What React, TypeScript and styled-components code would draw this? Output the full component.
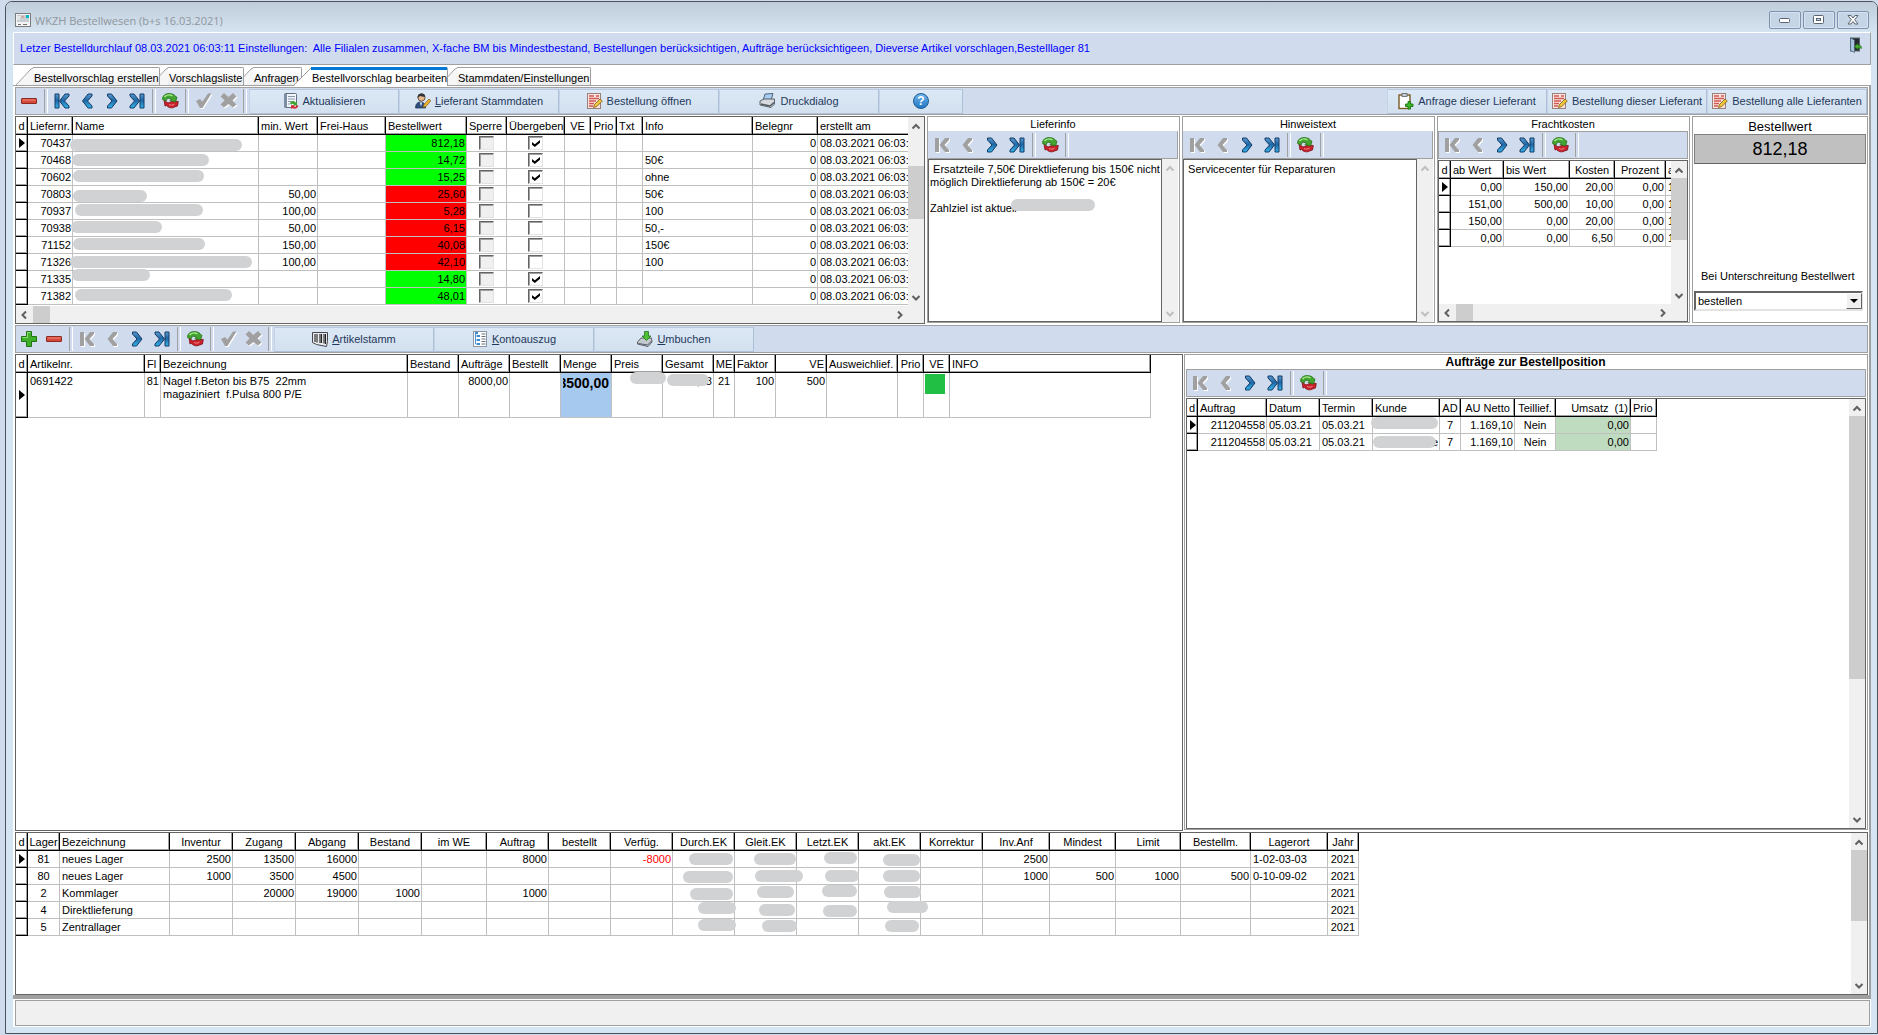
import React from "react";
import styled, { createGlobalStyle, css } from "styled-components";

const GRAY = "#a0a0a0";
const DARK = "#646464";
const BAR = "#d0dcee";
const UI_FONT = '"Liberation Sans", Arial, sans-serif';

const GlobalStyle = createGlobalStyle`
  * { box-sizing: border-box; }
  body {
    margin: 0;
    background: ${BAR};
    font-family: ${UI_FONT};
    font-size: 11px;
    line-height: 13px;
    color: #000;
  }
  button, input, select, textarea { font: inherit; color: inherit; margin: 0; }
`;

/* ---------- window frame ---------- */

const Desktop = styled.div`
  min-height: 100vh;
  display: flex;
  padding: 1px 0 1px 5px;
`;

const WindowFrame = styled.div`
  flex: 1;
  min-width: 0;
  display: flex;
  flex-direction: column;
  border: 1px solid #4b5259;
  border-radius: 7px 7px 0 0;
  background: #d6e5f2;
  padding: 0 6px 6px 7px;
`;

const TitleBar = styled.header`
  display: flex;
  align-items: center;
  gap: 4px;
  height: 30px;
  margin: 0 -6px 0 -7px;
  padding: 0 8px 0 9px;
  border-radius: 6px 6px 0 0;
  background: linear-gradient(#bfccda, #d6e4f1);
`;

const TitleIcon = styled.span`
  display: flex;
  padding-top: 6px;
`;

const Title = styled.h1`
  flex: 1;
  margin: 0;
  padding-top: 7px;
  font: 400 11px/16px "Open Sans", "Noto Sans", sans-serif;
  color: #8f969d;
`;

const WindowButtons = styled.div`
  display: flex;
  gap: 2px;
  padding-top: 6px;
`;

const WindowButton = styled.button`
  width: 32px;
  height: 18px;
  padding: 0;
  display: flex;
  align-items: center;
  justify-content: center;
  border: 1px solid #8092ad;
  border-radius: 2px;
  background: #c6d5e5;
  box-shadow: inset 0 0 0 1px #d6e3f0;
`;

const Client = styled.div`
  flex: 1;
  display: flex;
  flex-direction: column;
  min-height: 0;
  background: #fff;
`;

const InfoBar = styled.div`
  display: flex;
  align-items: center;
  justify-content: space-between;
  height: 33px;
  padding: 0 6px;
  border: 1px solid #fff;
  border-right-color: ${GRAY};
  border-bottom-color: ${GRAY};
  background: ${BAR};
  color: #0000ff;
  white-space: pre;
`;

const IconButton = styled.button`
  display: flex;
  align-items: center;
  justify-content: center;
  width: 25px;
  height: 25px;
  padding: 0;
  border: 0;
  background: none;
`;

const ExitButton = styled(IconButton)`
  width: 16px;
  padding-bottom: 7px;
`;

/* ---------- tabs ---------- */

const TabList = styled.div`
  display: flex;
  align-items: flex-end;
  height: 20px;
  padding-left: 3px;
`;

const TabButton = styled.button<{ $w: number; $order: number; $active?: boolean }>`
  position: relative;
  z-index: ${(p) => (p.$active ? 10 : p.$order)};
  display: flex;
  align-items: stretch;
  width: ${(p) => p.$w}px;
  height: ${(p) => (p.$active ? 19 : 18)}px;
  margin: 0 -8px ${(p) => (p.$active ? -1 : 0)}px 0;
  padding: 0;
  border: 0;
  background: none;
  text-align: left;
  & > svg { flex: none; }
`;

const TabLabel = styled.span<{ $active?: boolean }>`
  flex: 1;
  margin-left: -1px;
  padding-left: 1px;
  padding-top: ${(p) => (p.$active ? 2 : 4)}px;
  border-top: ${(p) => (p.$active ? "3px solid #0078d7" : `1px solid ${GRAY}`)};
  border-right: 1px solid ${GRAY};
  border-radius: 0 2px 0 0;
  background: ${(p) => (p.$active ? "#fff" : "linear-gradient(#fff, #ededed)")};
  white-space: nowrap;
`;

const Body = styled.main`
  flex: 1;
  display: flex;
  flex-direction: column;
  gap: 1px;
  min-height: 0;
  padding: 1px 1px 0 2px;
  border-top: 1px solid ${GRAY};
  border-right: 2px solid ${GRAY};
  border-bottom: 4px solid ${GRAY};
`;

const StatusBar = styled.footer`
  height: 26px;
  margin: 1px 1px 1px 2px;
  border: 1px solid ${GRAY};
  background: #f0f0f0;
`;

/* ---------- toolbars ---------- */

const Toolbar = styled.div<{ $flat?: boolean }>`
  display: flex;
  align-items: center;
  flex: none;
  height: 28px;
  padding-left: 1px;
  border: 1px solid ${GRAY};
  ${(p) => p.$flat && css`border-top-color: ${BAR}; border-left-color: ${BAR};`}
  background: ${BAR};
`;

const Separator = styled.span`
  width: 8px;
  height: 24px;
  display: flex;
  justify-content: center;
  &::before {
    content: "";
    width: 2px;
    border-left: 1px solid ${GRAY};
    border-right: 1px solid #fff;
  }
`;

const Spacer = styled.span`
  flex: 1;
`;

const ActionButton = styled.button<{ $w: number }>`
  display: flex;
  align-items: center;
  justify-content: center;
  gap: 4px;
  width: ${(p) => p.$w}px;
  height: 25px;
  padding: 0;
  border: 1px solid;
  border-color: #b8c9de #adbfd9 #adbfd9 #c4d3e6;
  background: linear-gradient(#dce8f5, #d2e0ef);
  color: #1e395b;
  white-space: nowrap;
`;

const HelpMark = styled.span`
  width: 16px;
  height: 16px;
  border: 1px solid #1c5a92;
  border-radius: 50%;
  background: linear-gradient(#6fb4ea, #2177c4);
  color: #fff;
  font-weight: 700;
  font-size: 12px;
  line-height: 14px;
  text-align: center;
`;

/* ---------- data grids ---------- */

const GridBox = styled.div<{ $fill?: boolean }>`
  display: grid;
  grid-template-columns: minmax(0, 1fr) auto;
  grid-template-rows: minmax(0, 1fr) auto;
  min-width: 0;
  min-height: 0;
  border: 1px solid ${DARK};
  background: #fff;
  ${(p) => p.$fill && css`flex: 1; margin-top: 1px;`}
`;

const GridView = styled.div`
  min-width: 0;
  overflow: hidden;
`;

const Table = styled.table<{ $w: number }>`
  width: ${(p) => p.$w}px;
  table-layout: fixed;
  border-collapse: separate;
  border-spacing: 0;
`;

type Align = "left" | "right" | "center";

const HeadCell = styled.th<{ $align: Align; $tight?: boolean }>`
  height: 18px;
  padding: ${(p) => (p.$tight ? "1px 0 0" : "1px 2px 0")};
  border-right: 1px solid #000;
  border-bottom: 1px solid #000;
  box-shadow: inset -1px -1px 0 ${GRAY};
  font-weight: 400;
  text-align: ${(p) => p.$align};
  white-space: pre;
`;

const Cell = styled.td<{ $align: Align; $bg?: string; $color?: string; $h: number }>`
  position: relative;
  height: ${(p) => p.$h}px;
  padding: 2px 1px 0 ${(p) => (p.$align === "left" ? 2 : 1)}px;
  border-right: 1px solid #c0c0c0;
  border-bottom: 1px solid #c0c0c0;
  background: ${(p) => p.$bg || "transparent"};
  color: ${(p) => p.$color || "inherit"};
  text-align: ${(p) => p.$align};
  vertical-align: top;
  white-space: pre;
  line-height: 13px;
`;

const Indicator = styled.td`
  padding: 0;
  border-right: 1px solid #000;
  border-bottom: 1px solid #000;
  box-shadow: inset -1px -1px 0 ${GRAY};
  vertical-align: middle;
`;

const RowMarker = styled.span`
  display: block;
  margin-left: 3px;
  width: 0;
  border: solid transparent;
  border-width: 5px 0 5px 6px;
  border-left-color: #000;
`;

const Smudge = styled.span<{ $x: number; $y: number; $w: number }>`
  position: absolute;
  z-index: 2;
  left: ${(p) => p.$x}px;
  top: ${(p) => p.$y}px;
  width: ${(p) => p.$w}px;
  height: 12px;
  border-radius: 6px;
  background: #d0d2d4;
`;

const CheckBox = styled.input`
  appearance: none;
  display: block;
  width: 15px;
  height: 14px;
  margin: -1px auto 0;
  border: 1px solid;
  border-color: ${DARK} #e3e3e3 #e3e3e3 ${DARK};
  box-shadow: inset 1px 1px 0 ${GRAY};
  background: #fff;
  &:disabled { background: #f0f0f0; }
  &:checked::before {
    content: "";
    display: block;
    width: 8px;
    height: 7px;
    margin: 3px 0 0 3px;
    background: #000;
    clip-path: polygon(0 30%, 35% 62%, 100% 0, 100% 40%, 35% 100%, 0 68%);
  }
`;

const QuantityClip = styled.span`
  display: flex;
  justify-content: flex-end;
  overflow: hidden;
  margin-right: 1px;
  font-weight: 700;
  font-size: 14px;
  line-height: 16px;
`;

const PackSwatch = styled.span`
  display: block;
  width: 20px;
  height: 20px;
  margin: -1px 0 0 -1px;
  background: #21c044;
`;

/* ---------- scroll bars ---------- */

const ScrollTrack = styled.div<{ $vertical?: boolean }>`
  display: flex;
  flex-direction: ${(p) => (p.$vertical ? "column" : "row")};
  justify-content: space-between;
  ${(p) => (p.$vertical ? "width: 16px;" : "height: 17px;")}
  background: #f0f0f0;
`;

const ScrollStep = styled.button`
  display: flex;
  align-items: center;
  justify-content: center;
  width: 16px;
  height: 17px;
  padding: 0;
  border: 0;
  background: none;
`;

const ScrollThumb = styled.span<{ $vertical?: boolean; $at: number; $size: number }>`
  ${(p) =>
    p.$vertical
      ? css`margin: ${p.$at}px 0 auto; width: 16px; height: ${p.$size}px;`
      : css`margin: 0 auto 0 ${p.$at}px; height: 17px; width: ${p.$size}px;`}
  background: #cdcdcd;
`;

const Corner = styled.div`
  background: #f0f0f0;
`;

/* ---------- side panels ---------- */

const TopRow = styled.section`
  display: grid;
  grid-template-columns: minmax(0, 1fr) 253px 253px 253px 176px;
  gap: 2px;
  height: 208px;
  flex: none;
`;

const MiddleRow = styled.section`
  flex: 1;
  display: grid;
  grid-template-columns: minmax(0, 1fr) 684px;
  gap: 1px;
  min-height: 0;
`;

const BottomRow = styled.section`
  display: grid;
  height: 163px;
  flex: none;
`;

const Panel = styled.section`
  display: flex;
  flex-direction: column;
  min-width: 0;
  min-height: 0;
  margin-bottom: 1px;
  padding-right: 1px;
  border: 1px solid ${GRAY};
`;

const PanelTitle = styled.h2`
  margin: 0;
  height: 14px;
  padding-top: 1px;
  font-size: 11px;
  line-height: 13px;
  font-weight: 400;
  text-align: center;
`;

const BoldTitle = styled(PanelTitle)`
  font-weight: 700;
  font-size: 12px;
`;

const Inset = styled.div`
  display: flex;
  flex-direction: column;
  flex: 1;
  min-height: 0;
  padding-left: 1px;
`;

const MemoRow = styled.div`
  position: relative;
  flex: 1;
  display: grid;
  grid-template-columns: 1fr 16px;
  min-height: 0;
`;

const Memo = styled.textarea`
  display: block;
  width: 100%;
  height: 100%;
  padding: 3px 1px;
  overflow: hidden;
  resize: none;
  border: 1px solid ${DARK};
  background: #fff;
  line-height: 13px;
  outline: 0;
`;

const ValuePanel = styled(Panel)`
  padding: 0 1px;
`;

const ValueTitle = styled.h2`
  margin: 0;
  height: 17px;
  font-weight: 400;
  font-size: 13px;
  line-height: 19px;
  text-align: center;
`;

const ValueBox = styled.output`
  display: block;
  height: 30px;
  border: 1px solid #808080;
  border-bottom-color: ${DARK};
  background: #c0c0c0;
  font-size: 18px;
  line-height: 28px;
  text-align: center;
`;

const FieldLabel = styled.label`
  margin: auto 0 8px 7px;
  white-space: nowrap;
`;

const SelectBox = styled.div`
  position: relative;
  margin: 0 3px 11px 0;
`;

const Select = styled.select`
  appearance: none;
  width: 100%;
  height: 20px;
  padding: 0 20px 0 2px;
  border: 2px solid;
  border-color: ${DARK} #e3e3e3 #e3e3e3 ${DARK};
  border-radius: 0;
  background: #fff;
`;

const SelectArrow = styled.span`
  position: absolute;
  top: 2px;
  right: 1px;
  width: 16px;
  height: 16px;
  border: 1px solid;
  border-color: #fff ${DARK} ${DARK} #fff;
  background: #f0f0f0;
  pointer-events: none;
  &::before {
    content: "";
    display: block;
    margin: 5px auto 0;
    width: 0;
    border: solid transparent;
    border-width: 4px 4px 0;
    border-top-color: #000;
  }
`;

/* ---------- icons ---------- */

type NavKind = "first" | "prev" | "next" | "last";

const navShapes: Record<NavKind, string[]> = {
  first: ["M1 1h4v14H1z", "M11 1h4v2L10.500 8L15 13v2h-4L5.500 8z"],
  prev: ["M9 1h4v2L8.500 8L13 13v2H9L3.500 8z"],
  next: ["M3.500 1h4L13 8L7.500 15h-4v-2L8 8L3.500 3z"],
  last: ["M11 1h4v14h-4z", "M1 1h4L10.500 8L5 15H1v-2L5.500 8L1 3z"],
};

const NavIcon = ({ kind, off }: { kind: NavKind; off?: boolean }) => (
  <svg width="17" height="17" viewBox="0 0 17 17" aria-hidden="true">
    <defs>
      <linearGradient id="nav" x1="0" y1="0" x2="0" y2="1">
        <stop offset="0" stopColor="#5a9bd0" />
        <stop offset="0.45" stopColor="#2066a4" />
        <stop offset="1" stopColor="#35b5ec" />
      </linearGradient>
    </defs>
    {off && navShapes[kind].map((d) => <path key={`s${d}`} d={d} fill="#fff" transform="translate(1 1)" />)}
    {navShapes[kind].map((d) => (
      <path key={d} d={d} fill={off ? "#a0a0a0" : "url(#nav)"} stroke={off ? "none" : "#123a66"} strokeWidth="1" />
    ))}
  </svg>
);

const MinusIcon = () => (
  <svg width="17" height="16" aria-hidden="true">
    <rect x="0.500" y="5.500" width="15" height="5" rx="0.500" fill="#d6493a" stroke="#8c2a20" />
    <path d="M1.500 7h13" stroke="#ee8c7e" />
  </svg>
);

const PlusIcon = () => (
  <svg width="17" height="16" aria-hidden="true">
    <path d="M5.500 0.500h5v5h5v5h-5v5h-5v-5h-5v-5h5z" fill="#3fae29" stroke="#1f7412" />
    <path d="M6.500 1.500h3M6.500 1.500v5h-5" stroke="#93de7c" fill="none" />
  </svg>
);

const RefreshIcon = () => (
  <svg width="17" height="17" aria-hidden="true">
    <path d="M2 7l1 6 1.500-.5c2 2.500 6 3 8 1.500L15.500 13l.8-4.500L11 8l-5 2z" fill="#c9202b" stroke="#7d1016" strokeWidth="0.800" />
    <path d="M.6 6.500C.3 3 3 .6 7 .6c3.500 0 6 1.200 6.500 3l1.500.6L13.500 9 8 7.500 9.500 6 5.500 5 4 8z" fill="#43a52f" stroke="#246e17" strokeWidth="0.800" />
    <path d="M2.500 4c1.500-2 5-2.600 8-1.200" stroke="#a8e892" fill="none" strokeWidth="1.400" />
    <path d="M7 11.500c2 1 3.500.8 5.500-.3" stroke="#ee8a86" fill="none" />
  </svg>
);

const CheckIcon = () => (
  <svg width="18" height="18" aria-hidden="true">
    <path d="M1 9l4-2 2.500 2.500L13 1.500h3.500L7.500 16H5z" fill="#fff" transform="translate(1 1)" />
    <path d="M1 9l4-2 2.500 2.500L13 1.500h3.500L7.500 16H5z" fill="#a0a0a0" />
  </svg>
);

const CrossIcon = () => (
  <svg width="18" height="18" aria-hidden="true">
    <path d="M4 1l4.500 4L13 1l3.500 3.500L12.500 8.500l4 4L13 15.500l-4.500-3.500L4 15.500.5 12.500l4-4-4-4z" fill="#fff" transform="translate(1 1)" />
    <path d="M4 1l4.500 4L13 1l3.500 3.500L12.500 8.500l4 4L13 15.500l-4.500-3.500L4 15.500.5 12.500l4-4-4-4z" fill="#a0a0a0" />
  </svg>
);

const UpdateIcon = () => (
  <svg width="16" height="16" aria-hidden="true">
    <rect x="1.500" y="0.500" width="12" height="14" rx="1" fill="#f3f6fa" stroke="#5f7083" />
    <path d="M1 1h3v13.500H1z" fill="#7b8ea3" />
    <path d="M5 3.500h7M5 6h7M5 8.500h4M5 11h2" stroke="#8798aa" />
    <path d="M7 10.500c1-3 4-3 5.500-1l1.500-.5v3.500h-4l1-1.200c-1-1-2-.5-2.500.5z" fill="#3ea52f" />
    <path d="M15.500 12.500c-1 3.500-4.500 4-6 2.500L8 16v-3.800h4l-1 1.200c1 .8 2 .3 2.500-.9z" fill="#cf2a35" />
  </svg>
);

const PersonIcon = () => (
  <svg width="16" height="16" aria-hidden="true">
    <path d="M.5 15c0-4 2-6 5-6s5 2 5 6z" fill="#2d4f80" stroke="#152b4d" strokeWidth="0.700" />
    <path d="M5 9.500l1 4 1-4z" fill="#fff" />
    <circle cx="6.500" cy="4.500" r="3.600" fill="#e7b98b" stroke="#3a2a1c" strokeWidth="0.700" />
    <path d="M2.800 5C2 1.500 5 .3 7 .5s3.500 1.500 3 3.500C8 4 6 3 5 3z" fill="#33353a" />
    <path d="M8 14.500l1-3L14 6l1.800 1.800L11 13.500z" fill="#f0b52f" stroke="#7a5410" strokeWidth="0.700" />
  </svg>
);

const OrderIcon = () => (
  <svg width="16" height="16" aria-hidden="true">
    <rect x="0.500" y="0.500" width="13" height="15" fill="#fbe3df" stroke="#9c7f7a" />
    <path d="M2 3h5M9 3h3M2 5.500h10M2 8h7M2 10.500h5M2 13h4" stroke="#cf5a54" strokeWidth="1.400" />
    <path d="M6.500 14.500l1-3L13 6l2.300 2L9.800 13.500z" fill="#f2c63a" stroke="#7a5c10" strokeWidth="0.800" />
  </svg>
);

const PrinterIcon = () => (
  <svg width="17" height="16" aria-hidden="true">
    <path d="M6 1l8-.5-2 7H4z" fill="#a9cdf0" stroke="#34495e" strokeWidth="0.800" />
    <path d="M1 8l4-2h10.500v5L12 14.500 1 12z" fill="#d7dbe0" stroke="#3d444c" strokeWidth="0.800" />
    <path d="M2 11l9 2 4-3.500" stroke="#50575f" fill="none" strokeWidth="1.500" />
  </svg>
);

const RequestIcon = () => (
  <svg width="16" height="17" aria-hidden="true">
    <rect x="1" y="2" width="11" height="13.500" fill="#fff" stroke="#7a5b22" strokeWidth="1.400" />
    <rect x="4" y="0.500" width="5" height="3" fill="#c9ced4" stroke="#59616a" strokeWidth="0.800" />
    <path d="M9 7.500h2.500V10H14v2.500h-2.500V15H9v-2.500H6.500V10H9z" fill="#3fb52b" stroke="#1d7610" strokeWidth="0.900" transform="translate(1 1)" />
  </svg>
);

const BarcodeIcon = () => (
  <svg width="16" height="16" aria-hidden="true">
    <path d="M.5 1.500h15v9l-1 5-10-2-4-2z" fill="#e9ebee" stroke="#44484e" />
    <path d="M3 3v8M5 3v8.500M8 3v9M9.500 3v9M12 3v9.500M13.500 3v10" stroke="#222" strokeWidth="1.100" />
  </svg>
);

const AccountIcon = () => (
  <svg width="16" height="16" aria-hidden="true">
    <rect x="1.500" y="0.500" width="13" height="15" fill="#fff" stroke="#8b97a5" />
    <path d="M3.500 2.500v10.500h3M3.500 5h3M3.500 9h3" stroke="#4b93d6" fill="none" />
    <path d="M3 2h3M5 5h3M5 9h3M5 13h3" stroke="#3f8bd2" strokeWidth="2" />
    <path d="M9.500 3h4M9.500 5.500h4M9.500 8h4M9.500 10.500h4M9.500 13h4" stroke="#66707b" />
  </svg>
);

const TransferIcon = () => (
  <svg width="16" height="16" aria-hidden="true">
    <path d="M.5 11L4 7h10.500l.5 4-4 4.500L.5 13z" fill="#c3c9cf" stroke="#3d444c" strokeWidth="0.800" />
    <path d="M1.500 12.500l9 1.500 4-4" stroke="#596069" fill="none" />
    <path d="M7.500.5h4V5H14L9.500 9.500 5 5h2.500z" fill="#4fbf34" stroke="#22751a" strokeWidth="0.800" />
  </svg>
);

const ExitIcon = () => (
  <svg width="14" height="16" aria-hidden="true">
    <rect x="1.500" y="1" width="9" height="13" fill="#23282e" stroke="#5c6670" />
    <path d="M1.500 1l4 2v12.500l-4-2z" fill="#a7c3de" stroke="#4d6175" strokeWidth="0.700" />
    <path d="M12.500 11.500c.5-3-2-3.500-3.500-3V6.500L5.500 9.500 9 12.500V11c1.500-.5 2.500 0 3.500.5z" fill="#43b02f" stroke="#1f6f13" strokeWidth="0.600" />
  </svg>
);

const AppIcon = () => (
  <svg width="16" height="15" aria-hidden="true">
    <rect x="0.500" y="0.500" width="15" height="13" fill="#f4f4f4" stroke="#7c7c7c" />
    <rect x="2" y="2" width="12" height="7" fill="#c5cdd0" />
    <path d="M2 4h4M2 6h3" stroke="#fff" />
    <path d="M6 4h3" stroke="#e08080" />
    <rect x="11" y="2" width="3" height="3" fill="#00b7c3" />
    <path d="M3 11.500h3M8 11.500h4" stroke="#6f6f6f" />
  </svg>
);

const Chevron = ({ dir, off }: { dir: "up" | "down" | "left" | "right"; off?: boolean }) => {
  const d = {
    up: "M1.500 7.500L5 4l3.500 3.500",
    down: "M1.500 3L5 6.500 8.500 3",
    left: "M7 1.500L3.500 5 7 8.500",
    right: "M3 1.500L6.500 5 3 8.500",
  }[dir];
  return (
    <svg width="10" height="10" aria-hidden="true">
      <path d={d} fill="none" stroke={off ? "#bfbfbf" : "#606060"} strokeWidth="2" />
    </svg>
  );
};

/* ---------- composed parts ---------- */

const VScroll = ({ at = 0, size = 0, off }: { at?: number; size?: number; off?: boolean }) => (
  <ScrollTrack $vertical>
    <ScrollStep type="button" aria-label="Nach oben"><Chevron dir="up" off={off} /></ScrollStep>
    {size > 0 && <ScrollThumb $vertical $at={at} $size={size} />}
    <ScrollStep type="button" aria-label="Nach unten"><Chevron dir="down" off={off} /></ScrollStep>
  </ScrollTrack>
);

const HScroll = ({ size }: { size: number }) => (
  <ScrollTrack>
    <ScrollStep type="button" aria-label="Nach links"><Chevron dir="left" /></ScrollStep>
    <ScrollThumb $at={1} $size={size} />
    <ScrollStep type="button" aria-label="Nach rechts"><Chevron dir="right" /></ScrollStep>
  </ScrollTrack>
);

const navLabels: Record<NavKind, string> = {
  first: "Erster Datensatz",
  prev: "Voriger Datensatz",
  next: "Nächster Datensatz",
  last: "Letzter Datensatz",
};

const Navigator = ({ atStart, closed }: { atStart?: boolean; closed?: boolean }) => (
  <>
    {(["first", "prev", "next", "last"] as NavKind[]).map((kind, i) => (
      <IconButton key={kind} type="button" aria-label={navLabels[kind]}>
        <NavIcon kind={kind} off={atStart && i < 2} />
      </IconButton>
    ))}
    <Separator />
    <IconButton type="button" aria-label="Neu laden"><RefreshIcon /></IconButton>
    <Separator />
    {!closed && (
      <>
        <IconButton type="button" aria-label="Speichern"><CheckIcon /></IconButton>
        <IconButton type="button" aria-label="Verwerfen"><CrossIcon /></IconButton>
        <Separator />
      </>
    )}
  </>
);

const Accel = ({ text }: { text: string }) => (
  <span><u>{text[0]}</u>{text.slice(1)}</span>
);

type Column = { label: string; w: number; align?: Align; head?: Align };
type RichCell = { text?: string; smudge?: [number, number, number]; bg?: string; color?: string; node?: React.ReactNode };
type CellValue = string | RichCell;

const DataTable = ({
  columns,
  rows,
  marker = 12,
  rowHeight = 17,
}: {
  columns: Column[];
  rows: CellValue[][];
  marker?: number;
  rowHeight?: number;
}) => (
  <Table $w={columns.reduce((sum, c) => sum + c.w, marker)}>
    <colgroup>
      <col width={marker} />
      {columns.map((c, i) => <col key={i} width={c.w} />)}
    </colgroup>
    <thead>
      <tr>
        <HeadCell $align="center" $tight>d</HeadCell>
        {columns.map((c, i) => (
          <HeadCell key={i} $align={c.head || "left"} $tight={c.head === "center"}>{c.label}</HeadCell>
        ))}
      </tr>
    </thead>
    <tbody>
      {rows.map((row, r) => (
        <tr key={r}>
          <Indicator>{r === 0 && <RowMarker />}</Indicator>
          {row.map((value, i) => {
            const cell: RichCell = typeof value === "string" ? { text: value } : value;
            return (
              <Cell key={i} $align={columns[i].align || "left"} $bg={cell.bg} $color={cell.color} $h={rowHeight}>
                {cell.node}
                {cell.text}
                {cell.smudge && <Smudge $x={cell.smudge[0]} $w={cell.smudge[1]} $y={cell.smudge[2]} />}
              </Cell>
            );
          })}
        </tr>
      ))}
    </tbody>
  </Table>
);

/* ---------- data ---------- */

const supplierColumns: Column[] = [
  { label: "Liefernr.", w: 45, align: "right" },
  { label: "Name", w: 186 },
  { label: "min. Wert", w: 59, align: "right" },
  { label: "Frei-Haus", w: 68 },
  { label: "Bestellwert", w: 81, align: "right" },
  { label: "Sperre", w: 40, align: "center" },
  { label: "Übergeben", w: 58, align: "center" },
  { label: "VE", w: 26, head: "center" },
  { label: "Prio", w: 26, head: "center" },
  { label: "Txt", w: 26 },
  { label: "Info", w: 110 },
  { label: "Belegnr", w: 65, align: "right" },
  { label: "erstellt am", w: 92 },
];

type Supplier = [string, [number, number, number], string, string, boolean, string];

const suppliers: Supplier[] = [
  ["70437", [-3, 172, 4], "", "812,18", true, ""],
  ["70468", [-1, 137, 2], "", "14,72", true, "50€"],
  ["70602", [0, 131, 1], "", "15,25", true, "ohne"],
  ["70803", [0, 74, 4], "50,00", "25,60", false, "50€"],
  ["70937", [2, 128, 1], "100,00", "5,28", false, "100"],
  ["70938", [-2, 91, 1], "50,00", "6,15", false, "50,-"],
  ["71152", [0, 132, 1], "150,00", "40,08", false, "150€"],
  ["71326", [-3, 182, 2], "100,00", "42,10", false, "100"],
  ["71335", [-1, 78, -2], "", "14,80", true, ""],
  ["71382", [2, 157, 1], "", "48,01", true, ""],
];

const supplierRows: CellValue[][] = suppliers.map(([nr, smudge, min, value, passed, info]) => [
  nr,
  { smudge },
  min,
  "",
  { text: value, bg: passed ? "#00ff00" : "#ff0000" },
  { node: <CheckBox type="checkbox" disabled aria-label={`Sperre ${nr}`} /> },
  { node: <CheckBox type="checkbox" defaultChecked={passed} aria-label={`Übergeben ${nr}`} /> },
  "",
  "",
  "",
  info,
  "0",
  "08.03.2021 06:03:",
]);

const freightColumns: Column[] = [
  { label: "ab Wert", w: 53, align: "right" },
  { label: "bis Wert", w: 66, align: "right" },
  { label: "Kosten", w: 45, align: "right", head: "center" },
  { label: "Prozent", w: 51, align: "right", head: "center" },
  { label: "a", w: 30 },
];

const freightRows: CellValue[][] = [
  ["0,00", "150,00", "20,00", "0,00", "1"],
  ["151,00", "500,00", "10,00", "0,00", "1"],
  ["150,00", "0,00", "20,00", "0,00", "1"],
  ["0,00", "0,00", "6,50", "0,00", "1"],
];

const articleColumns: Column[] = [
  { label: "Artikelnr.", w: 117 },
  { label: "Fl", w: 16, align: "right" },
  { label: "Bezeichnung", w: 247 },
  { label: "Bestand", w: 51 },
  { label: "Aufträge", w: 51, align: "right" },
  { label: "Bestellt", w: 51 },
  { label: "Menge", w: 51 },
  { label: "Preis", w: 51 },
  { label: "Gesamt", w: 51, align: "right" },
  { label: "ME", w: 21, align: "center", head: "center" },
  { label: "Faktor", w: 41, align: "right" },
  { label: "VE", w: 51, align: "right", head: "right" },
  { label: "Ausweichlief.", w: 71 },
  { label: "Prio", w: 26, head: "center" },
  { label: "VE", w: 26, head: "center" },
  { label: "INFO", w: 201 },
];

const articleRows: CellValue[][] = [
  [
    "0691422",
    "81",
    "Nagel f.Beton bis B75  22mm\nmagaziniert  f.Pulsa 800 P/E",
    "",
    "8000,00",
    "",
    { bg: "#a6c9ef", node: <QuantityClip>8500,00</QuantityClip> },
    { smudge: [18, 36, -1] },
    { text: "812,18", smudge: [4, 42, 1] },
    "21",
    "100",
    "500",
    "",
    "",
    { node: <PackSwatch /> },
    "",
  ],
];

const orderColumns: Column[] = [
  { label: "Auftrag", w: 69, align: "right" },
  { label: "Datum", w: 53 },
  { label: "Termin", w: 53 },
  { label: "Kunde", w: 67, align: "right" },
  { label: "AD", w: 21, align: "center", head: "center" },
  { label: "AU Netto", w: 54, align: "right", head: "center" },
  { label: "Teillief.", w: 41, align: "center", head: "center" },
  { label: "Umsatz  (1)", w: 75, align: "right", head: "right" },
  { label: "Prio", w: 26 },
];

const orderRows: CellValue[][] = [
  ["211204558", "05.03.21", "05.03.21", { smudge: [-2, 67, 0] }, "7", "1.169,10", "Nein", { text: "0,00", bg: "#c0dcc0" }, ""],
  ["211204558", "05.03.21", "05.03.21", { text: "e", smudge: [0, 63, 2] }, "7", "1.169,10", "Nein", { text: "0,00", bg: "#c0dcc0" }, ""],
];

const centered = (label: string, w: number): Column => ({ label, w, align: "right", head: "center" });

const stockColumns: Column[] = [
  { label: "Lager", w: 32, align: "center", head: "center" },
  { label: "Bezeichnung", w: 110 },
  centered("Inventur", 63),
  centered("Zugang", 63),
  centered("Abgang", 63),
  centered("Bestand", 63),
  centered("im WE", 65),
  centered("Auftrag", 62),
  centered("bestellt", 62),
  centered("Verfüg.", 62),
  centered("Durch.EK", 62),
  centered("Gleit.EK", 62),
  centered("Letzt.EK", 62),
  centered("akt.EK", 62),
  centered("Korrektur", 62),
  centered("Inv.Anf", 67),
  centered("Mindest", 66),
  centered("Limit", 65),
  centered("Bestellm.", 70),
  { label: "Lagerort", w: 77, head: "center" },
  { label: "Jahr", w: 31, align: "center", head: "center" },
];

const stockRows: CellValue[][] = [
  ["81", "neues Lager", "2500", "13500", "16000", "", "", "8000", "", { text: "-8000", color: "#ff0000" },
    { smudge: [16, 44, 2] }, { smudge: [19, 42, 2] }, { smudge: [27, 33, 1] }, { smudge: [24, 37, 3] },
    "", "2500", "", "", "", "1-02-03-03", "2021"],
  ["80", "neues Lager", "1000", "3500", "4500", "", "", "", "", "",
    { smudge: [10, 50, 3] }, { smudge: [20, 48, 2] }, { smudge: [28, 34, 2] }, { smudge: [24, 37, 2] },
    "", "1000", "500", "1000", "500", "0-10-09-02", "2021"],
  ["2", "Kommlager", "", "20000", "19000", "1000", "", "1000", "", "",
    { smudge: [17, 43, 3] }, { smudge: [22, 37, 1] }, { smudge: [25, 35, 0] }, { smudge: [25, 37, 1] },
    "", "", "", "", "", "", "2021"],
  ["4", "Direktlieferung", "", "", "", "", "", "", "", "",
    { smudge: [25, 38, 0] }, { smudge: [24, 36, 2] }, { smudge: [26, 34, 3] }, { smudge: [28, 41, -1] },
    "", "", "", "", "", "", "2021"],
  ["5", "Zentrallager", "", "", "", "", "", "", "", "",
    { smudge: [25, 38, 0] }, { smudge: [27, 35, 1] }, "", { smudge: [26, 34, 1] },
    "", "", "", "", "", "", "2021"],
];

const tabs = [
  { label: "Bestellvorschlag erstellen", w: 143 },
  { label: "Vorschlagsliste", w: 93 },
  { label: "Anfragen", w: 66 },
  { label: "Bestellvorschlag bearbeiten", w: 154, active: true },
  { label: "Stammdaten/Einstellungen", w: 151 },
];

const TabSlant = ({ active }: { active?: boolean }) => (
  <svg width="18" height={active ? 19 : 18} viewBox={`0 0 18 ${active ? 19 : 18}`} aria-hidden="true">
    <path d={active ? "M0 19L17 1h1v18z" : "M0 18L17 .5h1V18z"} fill={active ? "#fff" : "#f6f6f6"} />
    <path d={active ? "M0 18L17 1" : "M0 18L15 2L18 .5"} fill="none" stroke={GRAY} />
  </svg>
);

const MemoPanel = ({ title, text, children }: { title: string; text: string; children?: React.ReactNode }) => (
  <Panel>
    <PanelTitle>{title}</PanelTitle>
    <Toolbar $flat><Navigator atStart closed /></Toolbar>
    <MemoRow>
      <Memo aria-label={title} defaultValue={text} spellCheck={false} wrap="off" />
      <VScroll off />
      {children}
    </MemoRow>
  </Panel>
);

export default function App() {
  return (
    <>
      <GlobalStyle />
      <Desktop>
        <WindowFrame>
          <TitleBar>
            <TitleIcon><AppIcon /></TitleIcon>
            <Title>WKZH Bestellwesen (b+s 16.03.2021)</Title>
            <WindowButtons>
              <WindowButton type="button" aria-label="Minimieren">
                <svg width="12" height="6"><rect x="0.500" y="1.500" width="10" height="4" rx="1" fill="#fff" stroke="#5a6472" /></svg>
              </WindowButton>
              <WindowButton type="button" aria-label="Maximieren">
                <svg width="12" height="10">
                  <rect x="0.500" y="0.500" width="10" height="8" rx="1" fill="#fff" stroke="#5a6472" />
                  <rect x="3.500" y="3.500" width="4" height="2" fill="#c6d5e5" stroke="#5a6472" />
                </svg>
              </WindowButton>
              <WindowButton type="button" aria-label="Schließen">
                <svg width="12" height="10">
                  <path d="M1 .5h3L6 3 8 .5h3L7.700 4.700 11 9H8L6 6.500 4 9H1l3.300-4.300z" fill="#fff" stroke="#5a6472" />
                </svg>
              </WindowButton>
            </WindowButtons>
          </TitleBar>
          <Client>
            <InfoBar>
              <span>
                Letzer Bestelldurchlauf 08.03.2021 06:03:11 Einstellungen:{"  "}Alle Filialen zusammen, X-fache BM bis Mindestbestand, Bestellungen berücksichtigen, Aufträge berücksichtigeen, Dieverse Artikel vorschlagen,Bestelllager 81
              </span>
              <ExitButton type="button" aria-label="Beenden"><ExitIcon /></ExitButton>
            </InfoBar>
            <TabList role="tablist">
              {tabs.map((tab, i) => (
                <TabButton key={tab.label} type="button" role="tab" aria-selected={!!tab.active} $w={tab.w} $order={5 - i} $active={tab.active}>
                  <TabSlant active={tab.active} />
                  <TabLabel $active={tab.active}>{tab.label}</TabLabel>
                </TabButton>
              ))}
            </TabList>
            <Body>
              <Toolbar>
                <IconButton type="button" aria-label="Löschen"><MinusIcon /></IconButton>
                <Separator />
                <Navigator />
                <ActionButton type="button" $w={150}><UpdateIcon />Aktualisieren</ActionButton>
                <ActionButton type="button" $w={160}><PersonIcon /><Accel text="Lieferant Stammdaten" /></ActionButton>
                <ActionButton type="button" $w={160}><OrderIcon />Bestellung öffnen</ActionButton>
                <ActionButton type="button" $w={160}><PrinterIcon />Druckdialog</ActionButton>
                <ActionButton type="button" $w={84} aria-label="Hilfe"><HelpMark>?</HelpMark></ActionButton>
                <Spacer />
                <ActionButton type="button" $w={160}><RequestIcon />Anfrage dieser Lieferant</ActionButton>
                <ActionButton type="button" $w={160}><OrderIcon />Bestellung dieser Lieferant</ActionButton>
                <ActionButton type="button" $w={160}><OrderIcon />Bestellung alle Lieferanten</ActionButton>
              </Toolbar>

              <TopRow>
                <GridBox>
                  <GridView><DataTable columns={supplierColumns} rows={supplierRows} /></GridView>
                  <VScroll at={32} size={53} />
                  <HScroll size={17} />
                  <Corner />
                </GridBox>
                <MemoPanel
                  title="Lieferinfo"
                  text={" Ersatzteile 7,50€ Direktlieferung bis 150€ nicht\nmöglich Direktlieferung ab 150€ = 20€\n\nZahlziel ist aktuell"}
                >
                  <Smudge $x={83} $y={40} $w={84} />
                </MemoPanel>
                <MemoPanel title="Hinweistext" text=" Servicecenter für Reparaturen" />
                <Panel>
                  <PanelTitle>Frachtkosten</PanelTitle>
                  <Toolbar><Navigator atStart closed /></Toolbar>
                  <GridBox $fill>
                    <GridView><DataTable columns={freightColumns} rows={freightRows} /></GridView>
                    <VScroll at={0} size={62} />
                    <HScroll size={17} />
                    <Corner />
                  </GridBox>
                </Panel>
                <ValuePanel>
                  <ValueTitle>Bestellwert</ValueTitle>
                  <ValueBox>812,18</ValueBox>
                  <FieldLabel htmlFor="below-minimum">Bei Unterschreitung Bestellwert</FieldLabel>
                  <SelectBox>
                    <Select id="below-minimum" defaultValue="bestellen">
                      <option>bestellen</option>
                    </Select>
                    <SelectArrow />
                  </SelectBox>
                </ValuePanel>
              </TopRow>

              <Toolbar>
                <IconButton type="button" aria-label="Hinzufügen"><PlusIcon /></IconButton>
                <IconButton type="button" aria-label="Entfernen"><MinusIcon /></IconButton>
                <Separator />
                <Navigator atStart />
                <ActionButton type="button" $w={160}><BarcodeIcon /><Accel text="Artikelstamm" /></ActionButton>
                <ActionButton type="button" $w={160}><AccountIcon /><Accel text="Kontoauszug" /></ActionButton>
                <ActionButton type="button" $w={160}><TransferIcon /><Accel text="Umbuchen" /></ActionButton>
              </Toolbar>

              <MiddleRow>
                <GridBox>
                  <GridView><DataTable columns={articleColumns} rows={articleRows} rowHeight={45} /></GridView>
                </GridBox>
                <Panel>
                  <BoldTitle>Aufträge zur Bestellposition</BoldTitle>
                  <Inset>
                    <Toolbar><Navigator atStart closed /></Toolbar>
                    <GridBox $fill>
                      <GridView><DataTable columns={orderColumns} rows={orderRows} marker={11} /></GridView>
                      <VScroll at={0} size={263} />
                    </GridBox>
                  </Inset>
                </Panel>
              </MiddleRow>

              <BottomRow>
                <GridBox>
                  <GridView><DataTable columns={stockColumns} rows={stockRows} /></GridView>
                  <VScroll at={0} size={71} />
                </GridBox>
              </BottomRow>
            </Body>
            <StatusBar />
          </Client>
        </WindowFrame>
      </Desktop>
    </>
  );
}
